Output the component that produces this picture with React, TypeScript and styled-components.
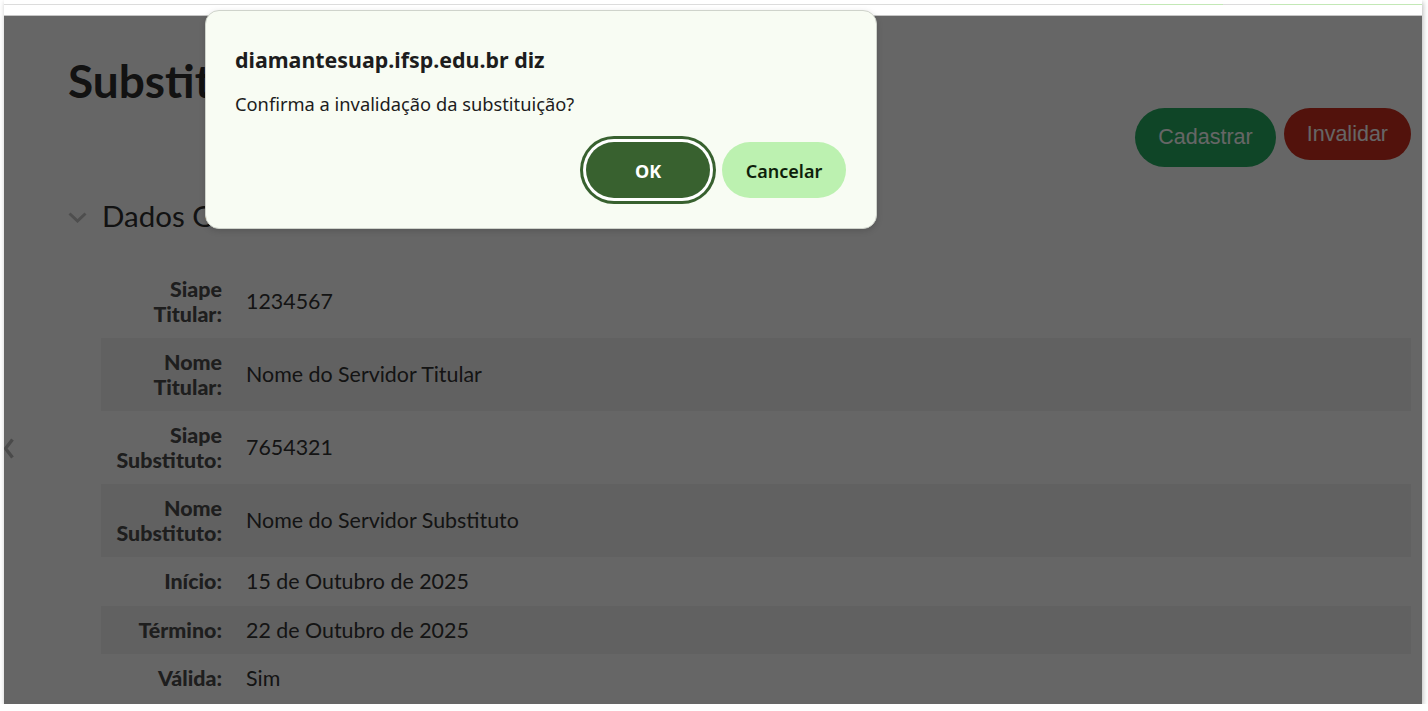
import React from 'react';
import styled, { createGlobalStyle } from 'styled-components';

const GlobalStyle = createGlobalStyle`
  html, body { margin: 0; padding: 0; background: #fff; overflow: hidden; }
  * { box-sizing: border-box; }
`;

const Window = styled.div`
  position: relative;
  margin-left: 4px;
  width: 1418px;
  height: 704px;
  display: flex;
  flex-direction: column;
  background: #fff;
  box-shadow: 1px 2px 5px rgba(0, 0, 0, 0.28);
  overflow: hidden;
`;

const TopStrip = styled.div`
  flex: 0 0 16px;
  padding-top: 4px;
  border-bottom: 1px solid #c6c6c6;
  background: #fff;
`;

const TabLine = styled.div`
  display: flex;
  height: 1px;
  background: #dcdcdc;
`;

const TabEdge = styled.span<{ $offset: number; $width: number }>`
  margin-left: ${(p) => p.$offset}px;
  width: ${(p) => p.$width}px;
  background: #c3e8b6;
`;

const PageArea = styled.div`
  position: relative;
  flex: 1;
  background: #fff;
  font-family: Lato, 'Noto Sans', sans-serif;
  color: #333;
`;

const Content = styled.main`
  padding: 40px 11px 0 64px;
`;

const Title = styled.h1`
  margin: 0;
  font-size: 46px;
  line-height: 50px;
  font-weight: 700;
  color: #2e2e2e;
`;

const Actions = styled.div`
  display: flex;
  justify-content: flex-end;
  align-items: flex-start;
  gap: 8px;
  margin-top: 2px;
`;

const ActionButton = styled.button<{ $tone: 'success' | 'danger'; $tall?: boolean }>`
  font-family: 'Liberation Sans', Arial, sans-serif;
  font-size: 21.5px;
  color: #fff;
  border: 0;
  border-radius: 30px;
  height: ${(p) => (p.$tall ? 59 : 52)}px;
  padding: 0 23px;
  background: ${(p) => (p.$tone === 'success' ? '#26ad63' : '#cd2e1e')};
`;

const SectionHeader = styled.h2`
  display: flex;
  align-items: center;
  gap: 15px;
  margin: 31px 0 0;
  font-size: 29.5px;
  font-weight: 400;
  line-height: 35px;
  color: #2e2e2e;
`;

const Chevron = styled.svg`
  flex: none;
  margin-top: 4px;
`;

const Details = styled.table`
  margin: 32px 0 0 33px;
  width: calc(100% - 33px);
  border-collapse: collapse;
  font-size: 21.4px;
  line-height: 24.5px;
`;

const Row = styled.tr`
  &:nth-child(even) {
    background: #f2f2f2;
  }
`;

const Label = styled.th`
  width: 133px;
  padding: 12px 12px 12px 8px;
  text-align: right;
  font-weight: 900;
  color: #4d4d4d;
  vertical-align: middle;
`;

const Value = styled.td`
  padding: 12px;
  text-align: left;
  color: #333;
  vertical-align: middle;
`;

const SideToggle = styled.svg`
  position: absolute;
  left: 0;
  top: 422px;
`;

const Overlay = styled.div`
  position: absolute;
  inset: 0;
  background: rgba(0, 0, 0, 0.6);
`;

const Dialog = styled.div`
  position: absolute;
  left: 201px;
  top: 10px;
  width: 672px;
  height: 219px;
  padding: 35px 30px 30px 29px;
  background: #f8fcf3;
  border: 1px solid #cfd3cb;
  border-radius: 14px;
  box-shadow: 0 2px 6px rgba(0, 0, 0, 0.15);
  font-family: 'Noto Sans', sans-serif;
  color: #1d1d1d;
  display: flex;
  flex-direction: column;
  z-index: 2;
`;

const DialogTitle = styled.h3`
  margin: 0;
  font-size: 21.4px;
  font-weight: 700;
  line-height: 27px;
`;

const DialogMessage = styled.p`
  margin: 18px 0 0;
  font-size: 18.3px;
  line-height: 25px;
`;

const DialogActions = styled.div`
  display: flex;
  justify-content: flex-end;
  gap: 12px;
  margin-top: auto;
`;

const DialogButton = styled.button<{ $primary?: boolean }>`
  height: 56px;
  width: 124px;
  padding: 2px 0 0;
  border: 0;
  border-radius: 28px;
  font-family: 'Noto Sans', sans-serif;
  font-size: 18px;
  font-weight: ${(p) => (p.$primary ? 700 : 600)};
  background: ${(p) => (p.$primary ? '#38612f' : '#bcf1b0')};
  color: ${(p) => (p.$primary ? '#fff' : '#0e1f0b')};
  box-shadow: ${(p) => (p.$primary ? '0 0 0 3px #fff, 0 0 0 6px #38612f' : 'none')};
`;

const rows = [
  { label: 'Siape Titular:', value: '1234567' },
  { label: 'Nome Titular:', value: 'Nome do Servidor Titular' },
  { label: 'Siape Substituto:', value: '7654321' },
  { label: 'Nome Substituto:', value: 'Nome do Servidor Substituto' },
  { label: 'Início:', value: '15 de Outubro de 2025' },
  { label: 'Término:', value: '22 de Outubro de 2025' },
  { label: 'Válida:', value: 'Sim' },
];

export default function App() {
  return (
    <>
      <GlobalStyle />
      <Window>
        <TopStrip>
          <TabLine>
            <TabEdge $offset={1136} $width={83} />
            <TabEdge $offset={47} $width={152} />
          </TabLine>
        </TopStrip>
        <PageArea>
          <Content>
            <Title>Substituição</Title>
            <Actions>
              <ActionButton $tone="success" $tall>Cadastrar</ActionButton>
              <ActionButton $tone="danger">Invalidar</ActionButton>
            </Actions>
            <SectionHeader>
              <Chevron width="19" height="11" viewBox="0 0 19 11">
                <polyline points="1.5,1.5 9.5,9 17.5,1.5" fill="none" stroke="#c2c2c2" strokeWidth="3" />
              </Chevron>
              Dados Gerais
            </SectionHeader>
            <Details>
              <tbody>
                {rows.map((r) => (
                  <Row key={r.label}>
                    <Label>{r.label}</Label>
                    <Value>{r.value}</Value>
                  </Row>
                ))}
              </tbody>
            </Details>
          </Content>
          <SideToggle width="10" height="21" viewBox="0 0 10 21">
            <polyline points="8.5,1.5 1.5,10.5 8.5,19.5" fill="none" stroke="#b8b8b8" strokeWidth="3.4" />
          </SideToggle>
          <Overlay />
        </PageArea>
        <Dialog role="alertdialog">
          <DialogTitle>diamantesuap.ifsp.edu.br diz</DialogTitle>
          <DialogMessage>Confirma a invalidação da substituição?</DialogMessage>
          <DialogActions>
            <DialogButton $primary>OK</DialogButton>
            <DialogButton>Cancelar</DialogButton>
          </DialogActions>
        </Dialog>
      </Window>
    </>
  );
}
